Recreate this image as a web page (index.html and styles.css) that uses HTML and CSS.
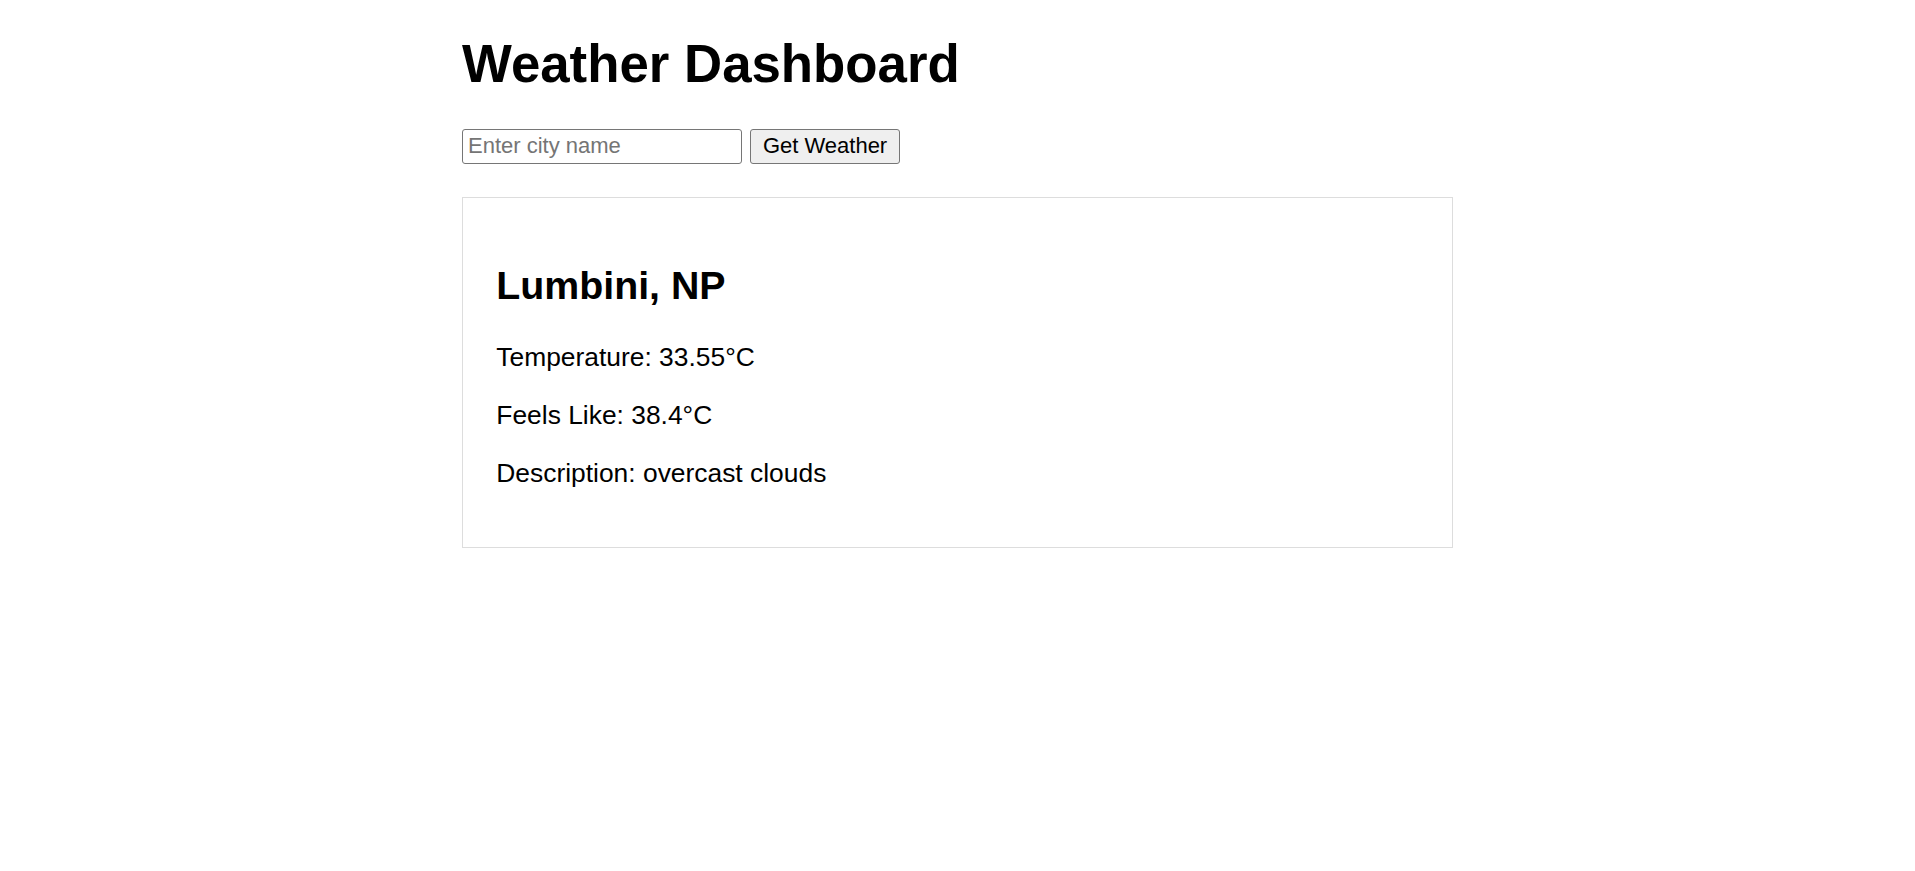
FILE: index.html
```html
<!DOCTYPE html>
<html lang="en">
<head>
<meta charset="utf-8">
<title>Weather Dashboard</title>
<link rel="stylesheet" href="styles.css">
</head>
<body>
<div class="container">
  <h1 class="title">Weather Dashboard</h1>
  <div class="search">
    <input class="city-input" type="text" placeholder="Enter city name">
    <button class="get-btn" type="button">Get Weather</button>
  </div>
  <div class="card">
    <h2 class="city">Lumbini, NP</h2>
    <p class="info">Temperature: 33.55°C</p>
    <p class="info">Feels Like: 38.4°C</p>
    <p class="info">Description: overcast clouds</p>
  </div>
</div>
</body>
</html>
```

FILE: styles.css
```css
html, body {
  margin: 0;
  padding: 0;
  background: #ffffff;
}
body {
  font-family: "Liberation Sans", Arial, sans-serif;
  color: #000000;
  font-size: 26.4px;
}
.container {
  width: 991px;
  margin: 0 auto;
  padding-top: 33.3px;
}
.title {
  font-size: 52.8px;
  font-weight: bold;
  margin: 0;
  line-height: normal;
}
.search {
  display: flex;
  gap: 8.4px;
  margin-top: 35px;
}
.city-input {
  box-sizing: border-box;
  width: 280px;
  height: 34.3px;
  border: 1px solid #767676;
  border-radius: 3px;
  padding: 0 5px;
  font-family: "Liberation Sans", Arial, sans-serif;
  font-size: 22px;
  color: #000;
  background: #fff;
  margin: 0;
}
.city-input::placeholder {
  color: #757575;
}
.get-btn {
  box-sizing: border-box;
  width: 149.3px;
  height: 34.3px;
  border: 1px solid #767676;
  border-radius: 3px;
  background: #efefef;
  font-family: "Liberation Sans", Arial, sans-serif;
  font-size: 22px;
  color: #000;
  padding: 0;
  margin: 0;
}
.card {
  margin-top: 33.7px;
  border: 1px solid #dddddd;
  padding: 33.3px 33.3px 30.5px;
}
.city {
  font-size: 39.3px;
  font-weight: bold;
  margin: 31.5px 0 34.2px;
  line-height: normal;
}
.info {
  margin: 27px 0;
  line-height: normal;
}
```
